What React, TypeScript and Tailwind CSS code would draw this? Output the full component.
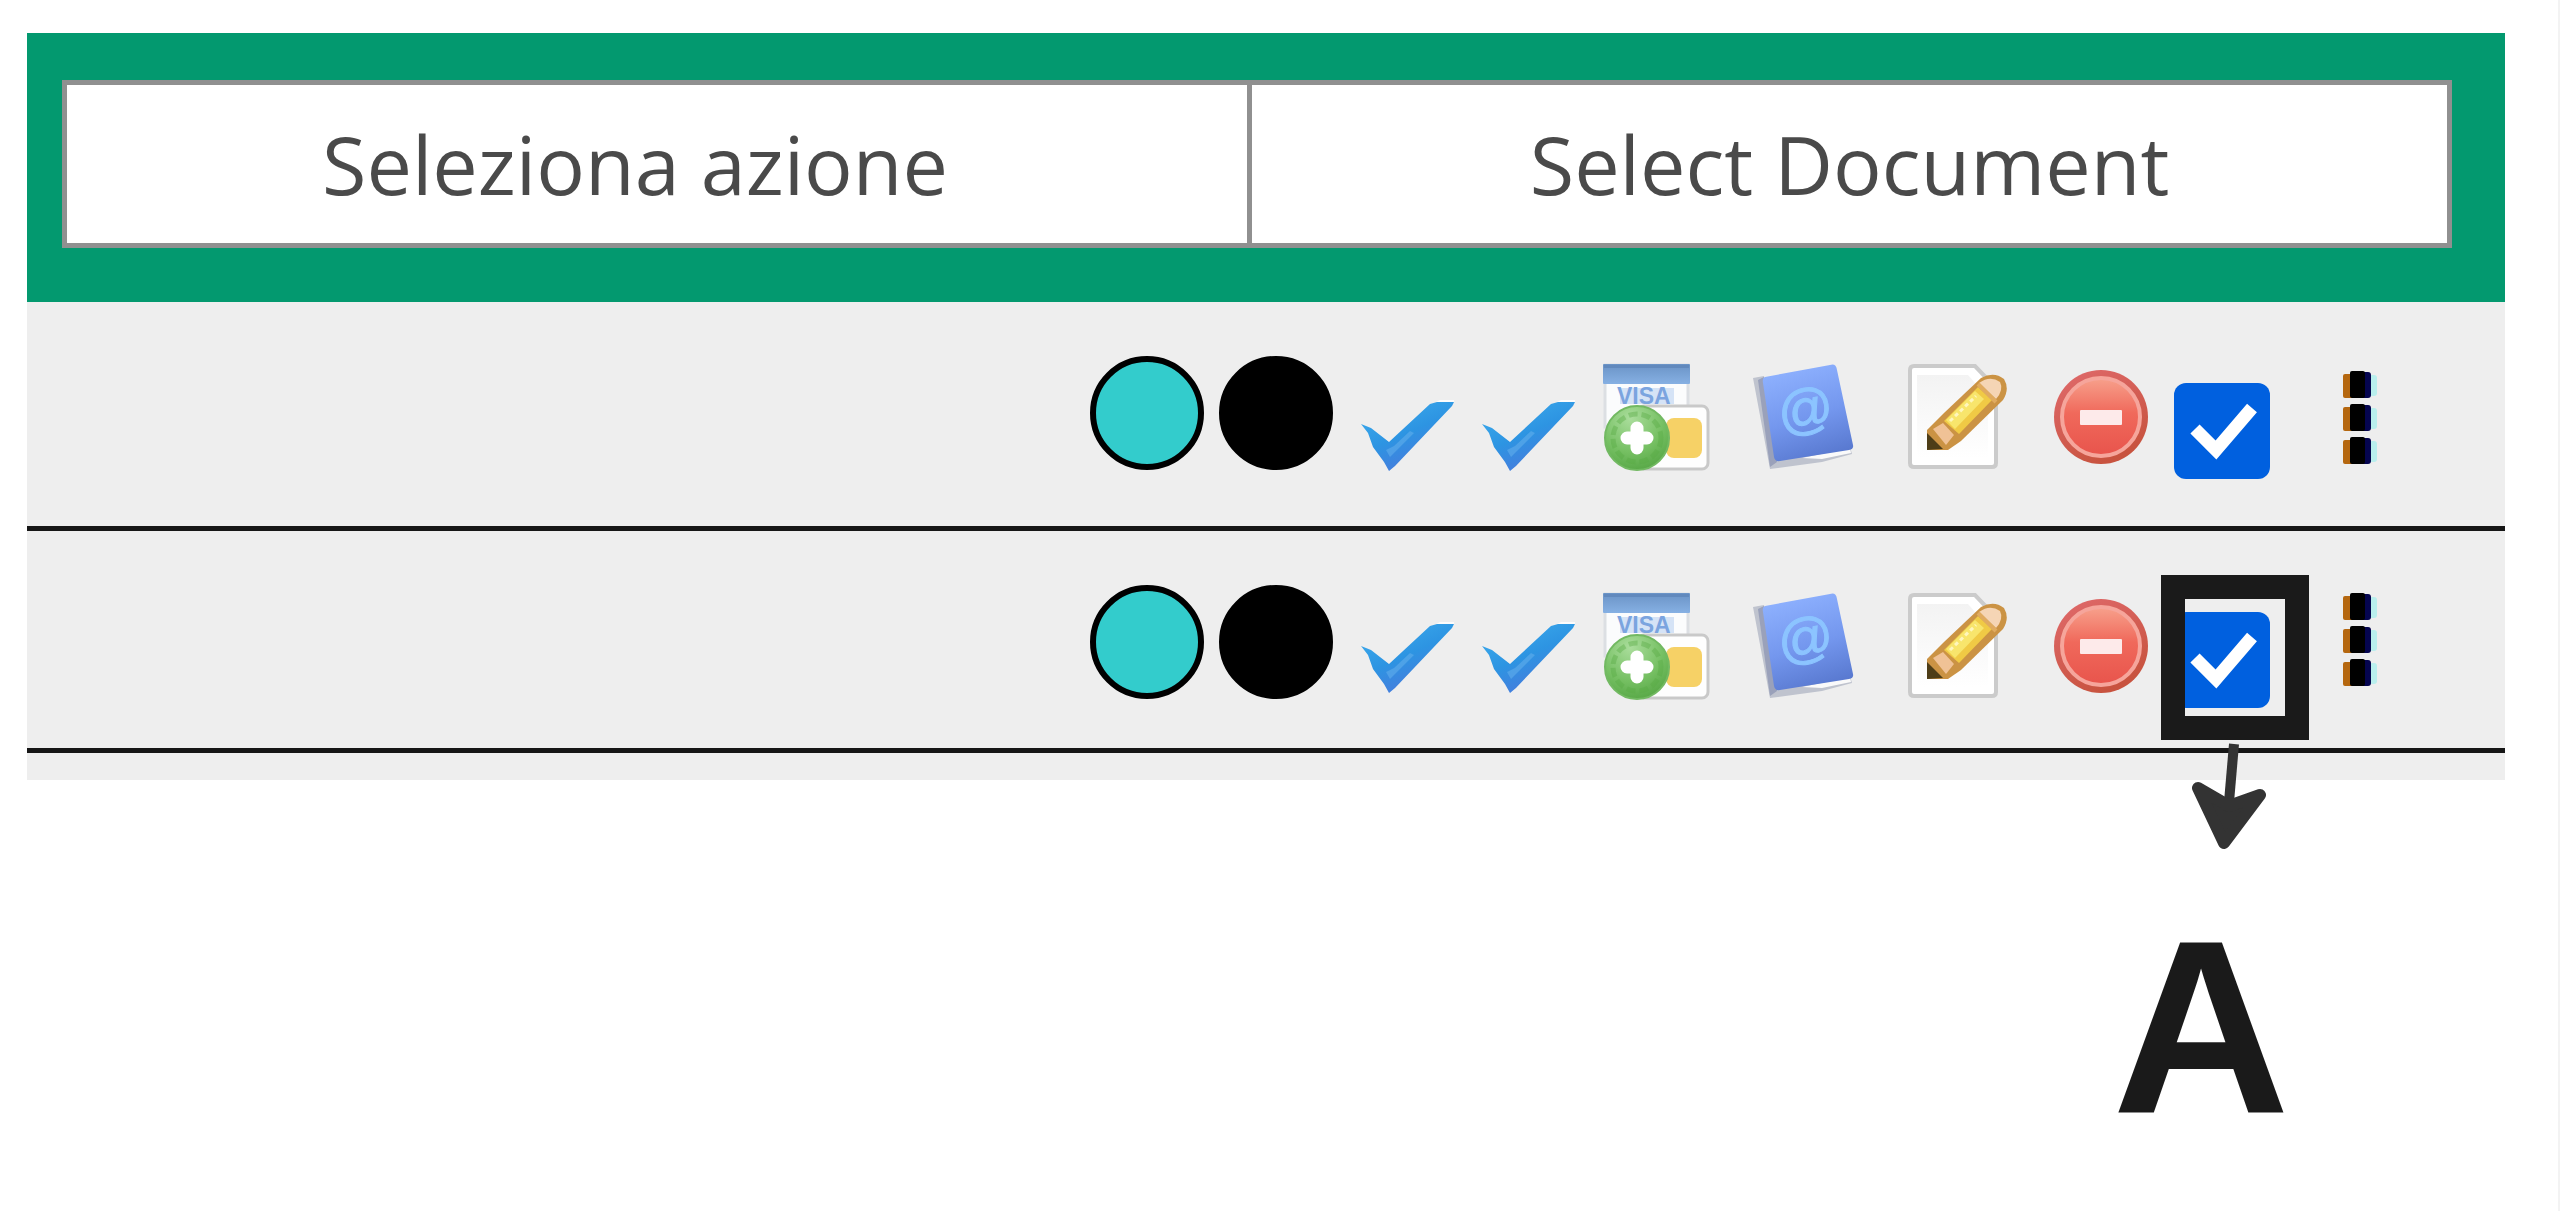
import React from "react";

function Dot({ label, color }: { label: string; color: string }) {
  return (
    <svg viewBox="0 0 116 116" className="size-[116px]" role="img" aria-label={label}>
      <circle cx="58" cy="58" r="54" fill={color} stroke="#000" strokeWidth="6" />
    </svg>
  );
}

function Tick() {
  return (
    <svg viewBox="0 0 94 72" className="h-[72px] w-[94px]" aria-hidden="true">
      <defs>
        <linearGradient id="tick" x1="0" y1="0" x2="0.6" y2="1">
          <stop offset="0" stopColor="#3fb0ee" />
          <stop offset="0.55" stopColor="#2d94e2" />
          <stop offset="1" stopColor="#4b78dc" />
        </linearGradient>
      </defs>
      <path d="M76 2 80 0 94 0 94 3Z" fill="#fff" opacity="0.8" />
      <path d="M1 24 11 28 29 42 70 4 77 2 94 2 92 6 35 66 29 71 24 62 13 47 8 33Z" fill="url(#tick)" />
      <path d="M26 50 34 46 50 31 54 33 30 57Z" fill="#6ab4ee" opacity="0.5" />
    </svg>
  );
}

function VisaAdd() {
  return (
    <svg viewBox="0 0 108 108" className="size-[108px]" aria-hidden="true">
      <defs>
        <linearGradient id="bar" x1="0" y1="0" x2="0" y2="1">
          <stop offset="0" stopColor="#6a93c6" />
          <stop offset="1" stopColor="#86b0e3" />
        </linearGradient>
        <radialGradient id="green" cx="0.4" cy="0.2" r="0.85">
          <stop offset="0" stopColor="#aadd9c" />
          <stop offset="0.6" stopColor="#76c063" />
          <stop offset="1" stopColor="#55a644" />
        </radialGradient>
      </defs>
      <rect x="3" y="2" width="83" height="62" fill="#fbfcfd" stroke="#dcdfe3" strokeWidth="3" />
      <rect x="1" y="1" width="87" height="20" rx="1" fill="url(#bar)" />
      <rect x="2" y="2" width="85" height="3" fill="#6189bd" />
      <rect x="18" y="25" width="54" height="16" fill="#d5e3f6" />
      <text x="15" y="41" fontFamily="Liberation Sans, sans-serif" fontWeight="bold" fontSize="23" fill="#7ba4df">VISA</text>
      <rect x="36" y="43" width="70" height="63" rx="6" fill="#fefefe" stroke="#c9c9c9" strokeWidth="3" />
      <rect x="64" y="55" width="36" height="40" rx="8" fill="#f6d166" />
      <circle cx="35" cy="75" r="32" fill="url(#green)" stroke="#72b962" strokeWidth="2" />
      <circle cx="35" cy="75" r="24" fill="none" stroke="#58ab43" strokeWidth="5" strokeDasharray="9 4" opacity="0.4" />
      <path d="M35 65V85M25 75H45" stroke="#fff" strokeWidth="13" strokeLinecap="round" />
    </svg>
  );
}

function AddressBook() {
  return (
    <svg viewBox="0 0 104 108" className="h-[108px] w-[104px]" aria-hidden="true">
      <defs>
        <linearGradient id="cover" x1="0.3" y1="0" x2="0.6" y2="1">
          <stop offset="0" stopColor="#8fb2ff" />
          <stop offset="0.55" stopColor="#7497ee" />
          <stop offset="1" stopColor="#5878cf" />
        </linearGradient>
      </defs>
      <path d="M1 15 12 13 26 97 98 84 100 91 70 99 18 106Z" fill="#bfc3ce" />
      <path d="M6 17 12 14 25 99 18 104Z" fill="#9aa1ba" />
      <path d="M50 95 98 85 99 90 70 96Z" fill="#fafafa" />
      <path d="M13 14 78 2Q84 0 85 7L101 82Q102 86 97 87L28 98Q23 99 22 94L11 20Q10 15 13 14Z" fill="url(#cover)" />
      <text x="26" y="65" transform="rotate(-9 53 50)" fontFamily="Liberation Sans, sans-serif" fontSize="55" fill="#8cc4ff" stroke="#8cc4ff">@</text>
    </svg>
  );
}

function EditNote() {
  return (
    <svg viewBox="0 0 100 108" className="h-[108px] w-[100px]" aria-hidden="true">
      <defs>
        <linearGradient id="sheet" x1="0" y1="0" x2="0" y2="1">
          <stop offset="0" stopColor="#f3f3f3" />
          <stop offset="1" stopColor="#ffffff" />
        </linearGradient>
      </defs>
      <path d="M6 3H67L88 25V100Q88 104 84 104H6Q2 104 2 100V7Q2 3 6 3Z" fill="#fff" stroke="#cbcbcb" strokeWidth="4" />
      <path d="M9 12H60L80 35V95H9Z" fill="url(#sheet)" />
      <path d="M19 87V67L36 50 73 15Q86 8 96 16 102 26 95 37L53 78 40 87Z" fill="#cb9344" />
      <path d="M36 58 70 24 84 37 51 71Z" fill="#f0ca45" />
      <path d="M38 57 67 28 76 36 47 66Z" fill="#f8e56c" />
      <path d="M42 58 68 33" stroke="#fff6bd" strokeWidth="3" strokeDasharray="4 3" />
      <path d="M71 20Q82 12 92 19 96 27 88 36Z" fill="#f5d5b5" />
      <path d="M70 21 88 39" stroke="#e0ab60" strokeWidth="4" />
      <path d="M25 66 35 60 46 72 38 82Z" fill="#f0c296" />
      <path d="M19 87V70L26 77 35 86Z" fill="#4d3d17" />
    </svg>
  );
}

function Remove() {
  return (
    <svg viewBox="0 0 96 96" className="size-24" aria-hidden="true">
      <defs>
        <linearGradient id="red" x1="0" y1="0" x2="0" y2="1">
          <stop offset="0" stopColor="#f7a18c" />
          <stop offset="0.45" stopColor="#f0695b" />
          <stop offset="1" stopColor="#e8544c" />
        </linearGradient>
        <linearGradient id="rim" x1="0" y1="0" x2="0.5" y2="1">
          <stop offset="0" stopColor="#e06a6c" />
          <stop offset="1" stopColor="#c8533f" />
        </linearGradient>
      </defs>
      <circle cx="48" cy="48" r="47" fill="url(#rim)" />
      <circle cx="48" cy="48" r="39" fill="url(#red)" stroke="#f6a59b" strokeWidth="4" />
      <rect x="27" y="41" width="42" height="15" rx="1" fill="#fdeaea" />
    </svg>
  );
}

function More() {
  return (
    <svg viewBox="0 0 38 96" className="h-24 w-[38px]" aria-hidden="true">
      {[1, 34, 67].map((y) => (
        <g key={y}>
          <rect x="27" y={y + 4} width="8" height="21" rx="3" fill="#b9efed" />
          <rect x="1" y={y + 3} width="12" height="24" rx="2" fill="#b5670f" />
          <rect x="18" y={y + 1} width="11" height="26" rx="3" fill="#05054f" />
          <rect x="8" y={y} width="15" height="27" rx="2" fill="#000" />
        </g>
      ))}
    </svg>
  );
}

function Marker() {
  return (
    <div className="pointer-events-none absolute -left-[13px] -top-[37px]" aria-hidden="true">
      <div className="h-[165px] w-[148px] border-[24px] border-[#1a1a1a]" />
      <svg viewBox="0 0 148 110" className="h-[110px] w-[148px]">
        <path d="M73 4 68 62" stroke="#333" strokeWidth="10" />
        <path d="M37 48 68 66 99 55 63 103Z" fill="#333" stroke="#333" strokeWidth="12" strokeLinejoin="round" />
      </svg>
    </div>
  );
}

function Row({ id, height, marked }: { id: string; height: string; marked?: boolean }) {
  return (
    <li className={`flex items-start justify-end border-b-[5px] border-[#161616] pb-[54px] pr-[125px] pt-[53px] ${height}`}>
      <div className="flex gap-[13px]">
        <Dot label="Stato" color="#33cccc" />
        <Dot label="Chiuso" color="#000000" />
      </div>
      <button className="ml-[26px] self-end" aria-label="Approva"><Tick /></button>
      <button className="ml-[27px] self-end" aria-label="Conferma"><Tick /></button>
      <button className="ml-[27px] mt-2" aria-label="Aggiungi visa"><VisaAdd /></button>
      <button className="ml-[42px] mt-2" aria-label="Rubrica"><AddressBook /></button>
      <button className="ml-[52px] mt-2" aria-label="Modifica"><EditNote /></button>
      <button className="ml-[45px] mt-3.5" aria-label="Rimuovi"><Remove /></button>
      <div className="relative ml-[25px] mt-7">
        <input
          id={id}
          type="checkbox"
          defaultChecked
          aria-label="Select Document"
          className="block size-24 appearance-none rounded-xl bg-[#0060df]"
        />
        <svg viewBox="0 0 96 96" className="pointer-events-none absolute inset-0 size-24" aria-hidden="true">
          <path d="M21 46 42 67 78 25" fill="none" stroke="#fff" strokeWidth="13" />
        </svg>
        {marked && <Marker />}
      </div>
      <button className="mb-1.5 ml-[72px] self-end" aria-label="Altro"><More /></button>
    </li>
  );
}

export default function App() {
  return (
    <main className="min-h-screen border-r-2 border-[#f3f3f3] bg-white pt-[33px] font-['Open_Sans',sans-serif]">
      <section className="ml-[27px] mr-[53px] bg-[#eeeeee] pb-[27px]">
        <header className="bg-[#03996f] pb-[54px] pl-[35px] pr-[53px] pt-[47px]">
          <div className="grid grid-cols-[1190fr_1200fr] border-[5px] border-[#909090] bg-white text-[81px] leading-[158px] text-[#4a4a4a]">
            <button className="border-r-[5px] border-[#909090] pr-11">Seleziona azione</button>
            <button>Select Document</button>
          </div>
        </header>
        <ul>
          <Row id="doc-1" height="h-[229px]" />
          <Row id="doc-2" height="h-[222px]" marked />
        </ul>
      </section>
      <p className="mr-[268px] mt-[124px] text-right font-['Liberation_Sans',sans-serif] text-[246px] font-bold leading-none text-[#1a1a1a]">
        A
      </p>
    </main>
  );
}
